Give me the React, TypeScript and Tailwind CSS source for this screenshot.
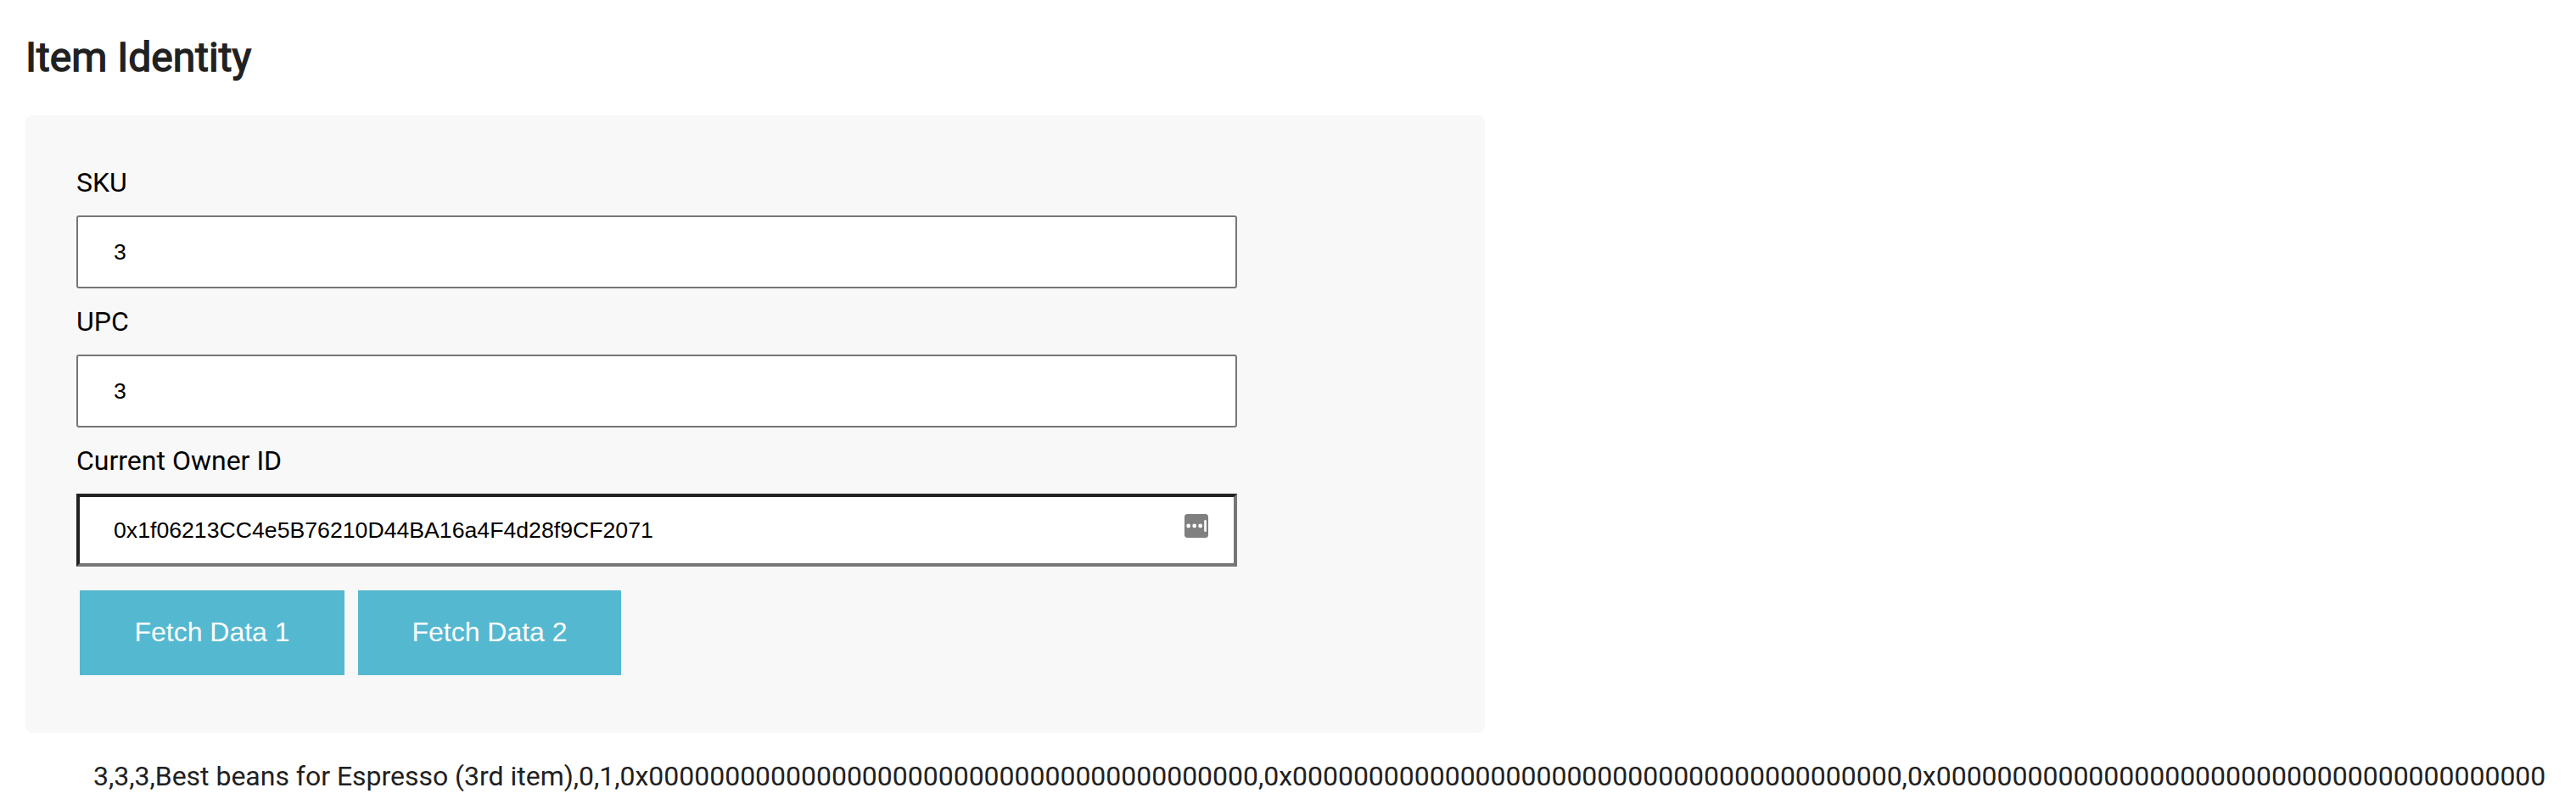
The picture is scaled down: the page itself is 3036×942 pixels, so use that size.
const ZERO_ADDRESS = '0x' + '0'.repeat(40);

const RESULT = ['3', '3', '3', 'Best beans for Espresso (3rd item)', '0', '1', ZERO_ADDRESS, ZERO_ADDRESS, ZERO_ADDRESS].join(',');

const inputText = 'block w-[1368px] h-[86px] bg-white text-black text-[26.6667px] leading-[30px] outline-none font-["Liberation_Sans",Arial,sans-serif]';
const outlined = 'border-2 border-[#767676] rounded-[3px] px-[42px]';
const inset = 'border-4 border-t-[#212121] border-l-[#212121] border-r-[#767676] border-b-[#767676] px-10';

function Field({ id, label, value }: { id: string; label: string; value: string }) {
  return (
    <div className="flex flex-col">
      <label htmlFor={id} className="flex h-[78px] items-center text-[32px] leading-[38px] text-black">
        {label}
      </label>
      <input id={id} type="text" defaultValue={value} className={`${inputText} ${outlined}`} />
    </div>
  );
}

function KeyIcon() {
  return (
    <svg className="absolute right-[34px] top-6 size-7" viewBox="0 0 28 28" aria-hidden="true">
      <rect width="28" height="28" rx="3.5" fill="#808080" />
      <circle cx="4.7" cy="14" r="2.4" fill="#fff" />
      <circle cx="11.7" cy="14" r="2.4" fill="#fff" />
      <circle cx="18.7" cy="14" r="2.4" fill="#fff" />
      <rect x="23.2" y="7" width="2.7" height="14" rx="1.3" fill="#fff" />
    </svg>
  );
}

function FetchButton({ children, className }: { children: string; className: string }) {
  return (
    <button
      type="button"
      className={`flex h-[100px] items-center justify-center bg-[#55b8d1] pb-0.5 text-[32px] leading-[36px] text-white font-["Liberation_Sans",Arial,sans-serif] ${className}`}
    >
      {children}
    </button>
  );
}

export default function App() {
  return (
    <main className="h-[942px] w-full overflow-hidden bg-white pl-[30px] pt-10 font-[Roboto,sans-serif] text-[#212121]">
      <h2 className="h-14 text-[48px] leading-[56px] font-normal [-webkit-text-stroke:1.4px_#212121]">Item Identity</h2>
      <section className="mt-10 h-[728px] w-[1720px] rounded-[8px] bg-[#f8f8f8] px-[60px] pt-10">
        <Field id="sku" label="SKU" value="3" />
        <Field id="upc" label="UPC" value="3" />
        <div className="flex flex-col">
          <label htmlFor="owner" className="flex h-[78px] items-center text-[32px] leading-[38px] text-black">
            Current Owner ID
          </label>
          <div className="relative w-[1368px]">
            <input
              id="owner"
              type="text"
              defaultValue="0x1f06213CC4e5B76210D44BA16a4F4d28f9CF2071"
              className={`${inputText} ${inset}`}
            />
            <KeyIcon />
          </div>
        </div>
        <div className="mt-7 ml-1 flex gap-4">
          <FetchButton className="w-[312px]">Fetch Data 1</FetchButton>
          <FetchButton className="w-[310px]">Fetch Data 2</FetchButton>
        </div>
      </section>
      <p className="ml-[80px] mt-8 whitespace-nowrap text-[32px] leading-[38px] tracking-[-0.02px]">{RESULT}</p>
    </main>
  );
}
